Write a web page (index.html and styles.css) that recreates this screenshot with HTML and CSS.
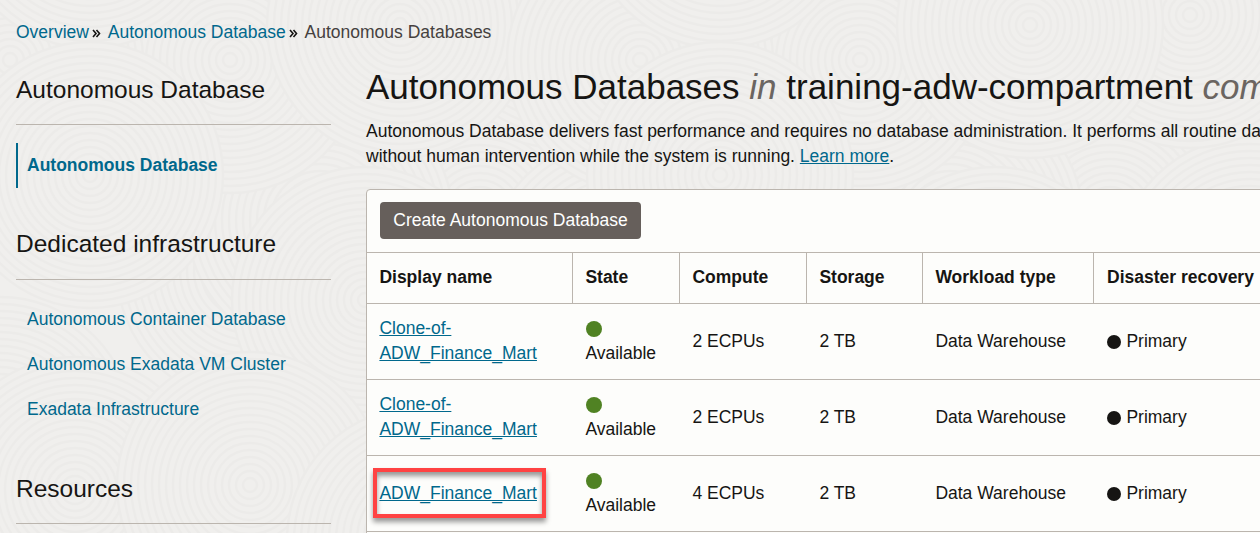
FILE: index.html
```html
<!DOCTYPE html>
<html lang="en">
<head>
<meta charset="utf-8">
<title>Autonomous Databases</title>
<link rel="stylesheet" href="styles.css">
</head>
<body>
<svg class="texture" width="1260" height="533" aria-hidden="true">
  <defs>
    <g id="rings">
      <circle r="133"/><circle r="126"/><circle r="119"/><circle r="112"/><circle r="105"/><circle r="98"/><circle r="91"/><circle r="84"/><circle r="77"/><circle r="70"/><circle r="63"/><circle r="56"/><circle r="49"/><circle r="42"/><circle r="35"/><circle r="28"/><circle r="21"/><circle r="14"/><circle r="7"/>
    </g>
    <g id="tile">
      <use href="#rings" x="480" y="215"/><use href="#rings" x="620" y="270"/><use href="#rings" x="250" y="270"/>
      <use href="#rings" x="320" y="220"/><use href="#rings" x="230" y="60"/><use href="#rings" x="10" y="60"/>
      <use href="#rings" x="560" y="15"/><use href="#rings" x="400" y="25"/><use href="#rings" x="90" y="-85"/>
      <use href="#rings" x="90" y="175"/><use href="#rings" x="365" y="300"/><use href="#rings" x="730" y="-85"/>
      <use href="#rings" x="0" y="430"/><use href="#rings" x="75" y="490"/><use href="#rings" x="250" y="485"/>
      <use href="#rings" x="420" y="540"/>
    </g>
  </defs>
  <use href="#tile"/><use href="#tile" x="630"/>
</svg>
<div class="page">
  <nav class="breadcrumb">
    <a href="#">Overview</a><svg class="sep" viewBox="0 0 9 9"><path d="M1 1l3 3.5L1 8M4.5 1l3 3.5-3 3.5"/></svg>
    <a href="#">Autonomous Database</a><svg class="sep" viewBox="0 0 9 9"><path d="M1 1l3 3.5L1 8M4.5 1l3 3.5-3 3.5"/></svg>
    <span>Autonomous Databases</span>
  </nav>
  <div class="columns">
    <aside class="sidebar">
      <h2>Autonomous Database</h2>
      <ul><li class="active"><a href="#">Autonomous Database</a></li></ul>
      <h2>Dedicated infrastructure</h2>
      <ul class="plain">
        <li><a href="#">Autonomous Container Database</a></li>
        <li><a href="#">Autonomous Exadata VM Cluster</a></li>
        <li><a href="#">Exadata Infrastructure</a></li>
      </ul>
      <h2>Resources</h2>
    </aside>
    <main class="content">
      <h1>Autonomous Databases <em>in</em> training-adw-compartment <em>compartment</em></h1>
      <p class="intro">Autonomous Database delivers fast performance and requires no database administration. It performs all routine database<br>without human intervention while the system is running. <a href="#">Learn more</a>.</p>
      <section class="panel">
        <div class="toolbar"><button class="create">Create Autonomous Database</button></div>
        <div class="row head">
          <div>Display name</div><div>State</div><div>Compute</div><div>Storage</div><div>Workload type</div><div>Disaster recovery</div>
        </div>
        <div class="row">
          <div class="tall"><a href="#">Clone-of-<br>ADW_Finance_Mart</a></div>
          <div class="tall"><i class="dot"></i>Available</div><div>2 ECPUs</div><div>2 TB</div><div>Data Warehouse</div>
          <div><i class="role"></i>Primary</div>
        </div>
        <div class="row">
          <div class="tall"><a href="#">Clone-of-<br>ADW_Finance_Mart</a></div>
          <div class="tall"><i class="dot"></i>Available</div><div>2 ECPUs</div><div>2 TB</div><div>Data Warehouse</div>
          <div><i class="role"></i>Primary</div>
        </div>
        <div class="row">
          <div class="marked"><a href="#">ADW_Finance_Mart</a></div>
          <div class="tall"><i class="dot"></i>Available</div><div>4 ECPUs</div><div>2 TB</div><div>Data Warehouse</div>
          <div><i class="role"></i>Primary</div>
        </div>
        <div class="row"></div>
      </section>
    </main>
  </div>
</div>
</body>
</html>
```
FILE: styles.css
```css
*, *::after { box-sizing: border-box; }
body {
  margin: 0;
  width: 1260px;
  height: 533px;
  overflow: hidden;
  background: #f0efed;
  color: #161513;
  font: 17.5px/25px "Liberation Sans", Arial, sans-serif;
}
a { color: #00688c; text-decoration: none; }
.texture {
  position: absolute;
  inset: 0;
  fill: #f0efed;
  stroke: #ecebe9;
  stroke-width: 2.4;
}
.page {
  position: relative;
  height: 533px;
  overflow: hidden;
  padding: 20px 0 0 16px;
}
.breadcrumb {
  display: flex;
  align-items: center;
  height: 24px;
  color: #45413e;
}
.sep {
  width: 9px;
  height: 9px;
  margin: 2px 6.3px 0 3.5px;
  fill: none;
  stroke: #161513;
  stroke-width: 1.6;
}
.columns {
  display: grid;
  grid-template-columns: 315px 1000px;
  column-gap: 35px;
}
.sidebar h2 {
  height: 92px;
  margin: 0;
  padding-top: 40px;
  border-bottom: 1px solid #bbb5ae;
  font-size: 24.5px;
  font-weight: 400;
  line-height: 32px;
}
.sidebar h2:first-child { height: 81px; padding-top: 30px; }
.sidebar ul { margin: 0; padding: 18px 0 0; list-style: none; }
.sidebar .plain { padding-top: 17px; }
.sidebar .plain + h2 { padding-top: 41px; }
.sidebar li { height: 45px; padding: 10px 0 0 11px; }
.sidebar .active { padding-left: 9px; border-left: 2px solid #00688c; font-weight: 700; }
.content h1 {
  margin: 0;
  padding-top: 22px;
  font-size: 35px;
  font-weight: 400;
  line-height: 42px;
  white-space: nowrap;
}
.content h1 em { color: #6b6561; }
.intro { margin: 11px 0 20px; white-space: nowrap; }
.intro a, .row a { text-decoration: underline; text-underline-offset: 1px; text-decoration-thickness: 1px; }
.row a { text-decoration-skip-ink: none; }
.panel {
  border: 1px solid #bbb5ae;
  border-radius: 4px;
  background: #fdfdfb;
}
.toolbar { height: 63px; padding: 12px 13px; border-bottom: 1px solid #bbb5ae; }
.create {
  display: block;
  width: 261px;
  height: 37px;
  padding: 0 0 1px;
  border: 0;
  border-radius: 4px;
  background: #665f5b;
  color: #fff;
  font: inherit;
  white-space: nowrap;
}
.row {
  display: grid;
  grid-template-columns: 206px 107px 127px 116px 171px 1fr;
  align-items: center;
  height: 76px;
  border-bottom: 1px solid #bbb5ae;
}
.row > div { padding-left: 12.4px; white-space: nowrap; }
.row > .tall { padding-bottom: 2px; }
.head { height: 51px; font-weight: 700; }
.head > div { height: 50px; padding-top: 12px; border-right: 1px solid #bbb5ae; }
.head > div:last-child { padding-left: 13px; border-right: 0; }
.dot {
  display: block;
  width: 16px;
  height: 16px;
  margin: 5px 0 4px .6px;
  border-radius: 50%;
  background: #508223;
}
.role {
  display: inline-block;
  width: 14px;
  height: 14px;
  margin: 0 5.4px 0 .6px;
  border-radius: 50%;
  background: #161513;
  vertical-align: -2px;
}
.marked { position: relative; }
.marked::after {
  content: "";
  position: absolute;
  left: 6px;
  top: -13px;
  width: 173px;
  height: 50px;
  border: 4px solid #ff4343;
  box-shadow: 0 4px 5px rgba(0, 0, 0, .4), inset 0 4px 5px rgba(0, 0, 0, .4);
}
```
